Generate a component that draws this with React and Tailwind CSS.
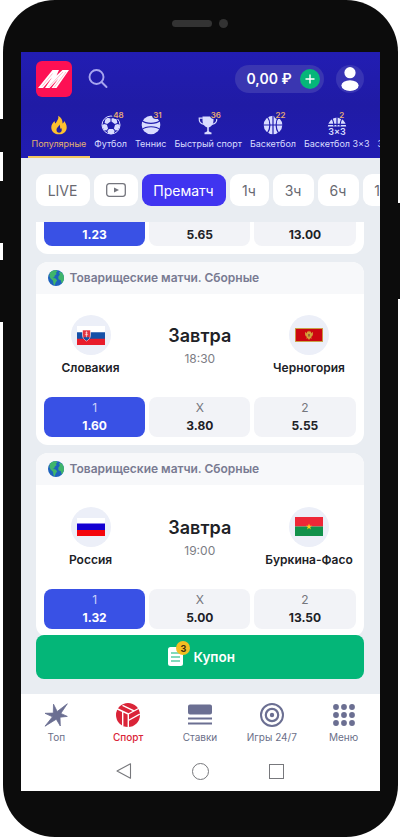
import React from 'react'

const sports = [
  { name: 'Популярные', icon: 'fire', active: true },
  { name: 'Футбол', icon: 'football', count: 48 },
  { name: 'Теннис', icon: 'tennis', count: 31 },
  { name: 'Быстрый спорт', icon: 'cup', count: 36 },
  { name: 'Баскетбол', icon: 'basketball', count: 22 },
  { name: 'Баскетбол 3×3', icon: 'basketball3', count: 2 },
]

const matches = [
  { home: 'Словакия', away: 'Черногория', homeFlag: 'sk', awayFlag: 'me', time: '18:30', odds: ['1.60', '3.80', '5.55'] },
  { home: 'Россия', away: 'Буркина-Фасо', homeFlag: 'ru', awayFlag: 'bf', time: '19:00', odds: ['1.32', '5.00', '13.50'] },
]

const SportIcon = ({ type }) => {
  if (type === 'fire') {
    return (
      <svg viewBox="0 0 20 20" className="size-5" fill="#fdc02f">
        <path d="M9.2.8c.5 2.4-.2 3.8-1.500 5.600C7.200 7 6.900 7.700 6.800 8.400 6 8 5.600 7.100 5.600 6.100 3.600 7.900 2.300 10 2.300 12.400c0 4 3.300 6.900 7.700 6.900s7.700-2.900 7.700-6.900c0-2.500-1.100-4.500-2.500-6.400-.2 1.200-.7 2-1.600 2.400C13.700 5 12.300 2.400 9.200.8z" />
        <path d="M10.300 9.500c.2 1.700-2.800 2.900-2.800 5.400 0 1.700 1.100 2.800 2.600 2.800s2.700-1.100 2.700-2.700c0-.9-.4-1.600-.8-2.200-.2.600-.5.900-.9 1.100.2-1.600.1-3.200-.8-4.400z" fill="#2320a8" />
      </svg>
    )
  }
  if (type === 'football') {
    return (
      <svg viewBox="0 0 20 20" className="size-5">
        <circle cx="10" cy="10" r="9" fill="#201cad" stroke="#d9dcff" strokeWidth="1" />
        <g fill="#d9dcff">
          <path d="M9.500 3.500v3L6.200 8.900 3.600 8 4.300 4.600 6.500 2.700zM10.500 3.500v3l3.300 2.400 2.600-.9-.7-3.400-2.200-1.900z" />
          <path d="M5.900 9.800l1.200 3.600-1.700 2-2.500-.5L1 10.500l2-1.600zM14.100 9.800l-1.200 3.600 1.700 2 2.500-.5L19 10.500l-2-1.600z" />
          <path d="M8 14h4l1.700 2.100-1 2.400-2.700.7-2.700-.7-1-2.400z" />
        </g>
      </svg>
    )
  }
  if (type === 'tennis') {
    return (
      <svg viewBox="0 0 20 20" className="size-5">
        <circle cx="10" cy="10" r="9.300" fill="#d9dcff" />
        <path d="M.8 5.500C5 9.200 15 9.200 19.200 5.500M.8 14.500c4.200-3.700 14.200-3.700 18.400 0" fill="none" stroke="#201cad" strokeWidth="1.200" />
      </svg>
    )
  }
  if (type === 'cup') {
    return (
      <svg viewBox="0 0 20 20" className="size-5" fill="#d9dcff">
        <path d="M4.500 1.500h11v4c0 3.700-1.900 6-4.700 6.900v3.600c.4.900 1.400 1.200 2.700 1.500v1.800h-7v-1.800c1.300-.3 2.300-.6 2.700-1.500v-3.600C6.400 11.500 4.500 9.200 4.500 5.500z" />
        <path d="M4.800 3.100H1.200c-.2 3.800 1.500 5.900 5.100 6.300M15.200 3.100h3.600c.2 3.800-1.500 5.900-5.100 6.300" fill="none" stroke="#d9dcff" strokeWidth="1.200" />
      </svg>
    )
  }
  if (type === 'basketball') {
    return (
      <svg viewBox="0 0 20 20" className="size-5">
        <circle cx="10" cy="10" r="9.300" fill="#d9dcff" />
        <path d="M10 0v20M0 10h20M4.200 1.500c3.600 4.800 3.600 12.200 0 17M15.800 1.500c-3.600 4.800-3.600 12.200 0 17" fill="none" stroke="#201cad" strokeWidth="1.200" />
      </svg>
    )
  }
  return (
    <svg viewBox="0 0 20 20" className="size-5 overflow-visible">
      <path d="M.8 11.500A9.300 10.500 0 0119.200 11.500z" fill="#d9dcff" />
      <path d="M10 .5v11M0 9.300h20M4.200 2.500c2 2.500 2.800 5.500 2.700 9M15.800 2.500c-2 2.500-2.800 5.500-2.700 9" fill="none" stroke="#201cad" strokeWidth="1.200" />
      <text x="10" y="19.500" textAnchor="middle" fontSize="9" fontWeight="600" fill="#d9dcff" fontFamily="Inter, sans-serif">3x3</text>
    </svg>
  )
}

const Flag = ({ code }) => (
  <span className="flex size-10 items-center justify-center rounded-full bg-[#eceff8]">
    {code === 'sk' && (
      <svg viewBox="0 0 28 19" className="h-[19px] w-7">
        <path fill="#fff" d="M0 0h28v7H0z" />
        <path fill="#1450a8" d="M0 6.300h28V13H0z" />
        <path fill="#e81c2a" d="M0 12.700h28V19H0z" />
        <path d="M5.500 4h8v5c0 3-1.800 4.800-4 6-2.200-1.200-4-3-4-6z" fill="#e5343f" stroke="#fff" strokeWidth=".6" />
        <path d="M6.500 12c.8-1.400 1.500-1.200 1.900-.6.600-1.200 1.600-1.200 2.200 0 .5-.6 1.200-.8 1.900.6-.7 1.200-1.800 2-3 2.700-1.200-.7-2.300-1.500-3-2.700z" fill="#1450a8" />
        <path d="M9.500 5.300v6M8.300 6.900h2.400M7.900 8.700h3.200" stroke="#fff" strokeWidth=".6" />
      </svg>
    )}
    {code === 'me' && (
      <svg viewBox="0 0 28 14" className="h-[14px] w-7">
        <path fill="#c9a24a" d="M0 0h28v14H0z" />
        <path fill="#cc0610" d="M.9.900h26.200v12.200H.9z" />
        <path d="M14 2.500l.8 1.300L16 3.500l.2 2 1.500-1.800c.6 2.500.2 4.300-1.700 5.300l1 1.500-1.800-.3L14 12l-1.200-1.800-1.800.3 1-1.500c-1.900-1-2.300-2.800-1.700-5.300l1.500 1.800.2-2 1.200.3z" fill="#d3a03a" />
        <path d="M13.200 6h1.600v2l-.8.900-.8-.9z" fill="#8b5a3c" />
      </svg>
    )}
    {code === 'ru' && (
      <svg viewBox="0 0 28 18" className="h-[18px] w-7">
        <path fill="#fff" d="M0 0h28v6H0z" />
        <path fill="#1400d2" d="M0 5.500h28V12H0z" />
        <path fill="#f4050c" d="M0 12h28v6H0z" />
      </svg>
    )}
    {code === 'bf' && (
      <svg viewBox="0 0 28 19" className="h-[19px] w-7">
        <path fill="#ee2737" d="M0 0h28v9.500H0z" />
        <path fill="#12914b" d="M0 9.500h28V19H0z" />
        <path fill="#fcd116" d="M14 6.500l.8 2.200h2.300l-1.900 1.400.7 2.300-1.900-1.400-1.900 1.400.7-2.300-1.900-1.400h2.300z" />
      </svg>
    )}
  </span>
)

const Globe = () => (
  <svg viewBox="0 0 16 16" className="size-4">
    <circle cx="8" cy="8" r="8" fill="#1d62bd" />
    <path d="M2 2.700C3.500.9 6 .1 8 .1l1.500 1.500-1.800 1.200 1 1.300-1.900 1.400-.5 1.700L4.500 8l2.700.3 2 1.900-1.500 2.300-1 2.700-1.200-.9-.5-3.600L2.600 8.500 1.400 6z" fill="#3fb56b" />
    <path d="M11 2l2.500.2C15 3.600 16 5.800 16 8c0 2.300-1 4.200-2.300 5.500l-.9-3.300-2.300-1-.3-2.500 1.600-1.900z" fill="#3fb56b" />
  </svg>
)

const Team = ({ name, flag }) => (
  <div className="flex w-[109px] flex-col items-center">
    <Flag code={flag} />
    <span className="mt-[5px] text-[12px] leading-[15px] font-semibold whitespace-nowrap text-[#202126]">{name}</span>
  </div>
)

const oddColors = (active) => active ? 'bg-[#3951e5] text-white' : 'bg-[#f2f3f7] text-[#202126]'

const Odd = ({ label, value, active }) => (
  <div className={`flex h-10 flex-1 flex-col items-center justify-center rounded-lg ${oddColors(active)}`}>
    <span className={`text-[12px] leading-[18px] ${active ? 'text-[#ccd3fa]' : 'text-[#75767d]'}`}>{label}</span>
    <span className="text-[12px] leading-[18px] font-bold">{value}</span>
  </div>
)

// Lower part of the card that is scrolled under the filter
const ScrolledCard = ({ values }) => (
  <div className="flex h-[31.5px] shrink-0 gap-1 rounded-b-xl bg-white px-2 pb-2">
    {values.map((v, i) => (
      <div key={v} className={`flex flex-1 items-center justify-center rounded-b-lg pt-[2px] text-[12px] font-bold ${oddColors(i === 0)}`}>{v}</div>
    ))}
  </div>
)

const MatchCard = ({ match }) => (
  <div className="h-[183.5px] shrink-0 overflow-hidden rounded-xl bg-white">
    <div className="flex h-8 items-center gap-[5.5px] bg-[#f7f8fa] pl-3 text-[12px] font-semibold text-[#797b92]">
      <Globe />
      <span>Товарищеские матчи. Сборные</span>
    </div>
    <div className="flex h-[103.5px] justify-between pt-[21.5px]">
      <Team name={match.home} flag={match.homeFlag} />
      <div className="flex flex-col items-center pt-[9px]">
        <span className="text-[18px] leading-6 font-semibold text-[#202126]">Завтра</span>
        <span className="mt-[3px] text-[12px] leading-4 text-[#7c7d84]">{match.time}</span>
      </div>
      <Team name={match.away} flag={match.awayFlag} />
    </div>
    <div className="flex gap-1 px-2">
      <Odd label="1" value={match.odds[0]} active />
      <Odd label="X" value={match.odds[1]} />
      <Odd label="2" value={match.odds[2]} />
    </div>
  </div>
)

const Chip = ({ children, className }) => (
  <span className={`flex h-8 shrink-0 items-center justify-center rounded-[9px] text-[14px] ${className}`}>{children}</span>
)

const NavItem = ({ label, active, children }) => (
  <div className={`flex w-[72px] flex-col items-center text-[10px] leading-[14px] ${active ? 'font-medium text-[#da2438]' : 'text-[#6b6f88]'}`}>
    <svg viewBox="0 0 24 24" className="size-6">{children}</svg>
    <span className="mt-[3px]">{label}</span>
  </div>
)

const Header = () => (
  <header className="h-[106px] shrink-0 bg-linear-to-b from-[#221db3] via-[#201ba5] to-[#211cb2]">
    <div className="flex h-[53px] items-center pr-4 pl-[15px]">
      <span className="flex size-9 items-center justify-center rounded-md bg-[#fd1054]">
        <svg viewBox="0 0 31 18" className="h-[18px] w-[31px]" fill="#fff">
          <path d="M0 18L14.500 0H21l-2.500 5.500L24.500 0H31L18.500 18h-5l7-9.500L11.500 18H7l7-10.500L5 18z" />
          <path d="M14.500 3.500L4 16.500M25 2L10.500 17M28 2L16 17.500" stroke="#fd1054" strokeWidth=".3" />
        </svg>
      </span>
      <svg viewBox="0 0 20 20" className="ml-4 size-5" fill="none" stroke="#a7a5ef" strokeWidth="1.900" strokeLinecap="round">
        <circle cx="8.500" cy="8" r="7" />
        <path d="M13.500 13L18.500 18" />
      </svg>
      <div className="ml-auto flex h-7 w-[89px] items-center justify-between rounded-full bg-[#3a36b1] pr-1 pl-3">
        <span className="text-[14px] font-semibold whitespace-nowrap text-white">0,00 ₽</span>
        <span className="flex size-5 items-center justify-center rounded-full bg-[#05b679]">
          <svg viewBox="0 0 10 10" className="size-[10px]" stroke="#fff" strokeWidth="1.400">
            <path d="M5 .5v9M.5 5h9" />
          </svg>
        </span>
      </div>
      <span className="ml-3 flex size-7 items-center justify-center rounded-full bg-[#3834b4]">
        <svg viewBox="0 0 18 24" className="h-6 w-[18px]" fill="#fff">
          <circle cx="9" cy="5.700" r="5.600" />
          <ellipse cx="9" cy="18.600" rx="8.600" ry="5.300" />
        </svg>
      </span>
    </div>
    <div className="flex h-[53px] gap-2 overflow-hidden pl-[11px]">
      {sports.map((s) => (
        <div key={s.name} className={`flex h-full shrink-0 flex-col items-center ${s.active ? 'text-[#e2b071]' : 'text-[#d9dcff]'}`}>
          <span className="relative mt-[10px]">
            <SportIcon type={s.icon} />
            {s.count && (
              <span className="absolute -top-[3px] left-[11.5px] rounded-bl-sm bg-[#201ca8] pl-px text-[8px] leading-[7px] font-semibold text-[#e6ab74]">{s.count}</span>
            )}
          </span>
          <span className="mt-[2px] text-[9px] leading-[14px] whitespace-nowrap">{s.name}</span>
          {s.active && <span className="mt-auto -mx-1 h-[2px] w-[62px] bg-[#f3c75f]" />}
        </div>
      ))}
      <span className="mt-[32px] shrink-0 text-[9px] leading-[14px] text-[#d9dcff]">Зимние</span>
    </div>
  </header>
)

const TimeFilter = () => (
  <div className="flex h-16 shrink-0 items-center gap-1 overflow-hidden pl-[15px] text-[#686971]">
    <Chip className="w-[54px] bg-white">LIVE</Chip>
    <Chip className="w-11 bg-white">
      <svg viewBox="0 0 20 14" className="h-[14px] w-5" fill="none" stroke="#74757d" strokeWidth="1.300">
        <rect x=".7" y=".7" width="18.600" height="12.600" rx="2.500" />
        <path d="M8 4.500l5 2.500-5 2.500z" fill="#74757d" stroke="none" />
      </svg>
    </Chip>
    <Chip className="w-[84px] bg-[#4034f0] text-white">Прематч</Chip>
    <Chip className="w-[39px] bg-white">1ч</Chip>
    <Chip className="w-[41px] bg-white">3ч</Chip>
    <Chip className="w-[41px] bg-white">6ч</Chip>
    <Chip className="w-[46px] bg-white">12ч</Chip>
  </div>
)

const BottomNav = () => (
  <nav className="flex h-[54px] shrink-0 justify-center pt-[9px]">
    <NavItem label="Топ">
      <path fill="#6b6f92" stroke="#6b6f92" strokeWidth=".8" strokeLinejoin="round" d="M9.500 1.200l3.700 7.300L23.300.8l-6.500 9.600 6.500 3-7.300.8.300 8.800-4-6.800L1 23.200l7.500-9.400L1 10.300l8.300-.2z" />
    </NavItem>
    <NavItem label="Спорт" active>
      <circle cx="12" cy="12" r="12" fill="#da2438" />
      <path d="M12.300 11V24M12.300 11L.5 5.500M12.300 11L23.500 5M6.700 8.700V23M6.500 2.300l11.500 5.500M12.300 17.500l11.500-6.500" fill="none" stroke="#fff" strokeWidth="1.400" />
    </NavItem>
    <NavItem label="Ставки">
      <path d="M0 3.500A2 2 0 012 1.500h20a2 2 0 012 2v6a2 2 0 01-2 2H2a2 2 0 01-2-2z" fill="#6b6f92" />
      <path d="M0 15.500h24M0 20.500h24" stroke="#6b6f92" strokeWidth="2.200" />
    </NavItem>
    <NavItem label="Игры 24/7">
      <circle cx="12" cy="12" r="11" fill="none" stroke="#6b6f92" strokeWidth="2" />
      <circle cx="12" cy="12" r="6.200" fill="none" stroke="#6b6f92" strokeWidth="2.200" />
      <circle cx="12" cy="12" r="2.200" fill="#6b6f92" />
    </NavItem>
    <NavItem label="Меню">
      {[4, 12, 20].map((y) => [4, 12, 20].map((x) => (
        <circle key={`${x}-${y}`} cx={x} cy={y} r="2.900" fill="#6b6f92" />
      )))}
    </NavItem>
  </nav>
)

const SystemBar = () => (
  <div className="flex h-[43px] shrink-0 items-center justify-center gap-[60px] pt-[3px] pr-px">
    <svg viewBox="0 0 16 16" className="size-4" fill="none" stroke="#77787c" strokeWidth="1.100" strokeLinejoin="round">
      <path d="M1 8L14.500.8v14.400z" />
    </svg>
    <span className="size-[17px] rounded-full border border-[#77787c]" />
    <span className="size-[15px] border border-[#77787c]" />
  </div>
)

const App = () => (
  <div className="relative h-[837px] w-[400px] overflow-hidden bg-white font-[Inter,sans-serif]">
    {/* Side buttons */}
    <span className="absolute top-[119px] left-0 h-[33px] w-1 bg-[#0c0c0c]" />
    <span className="absolute top-[181px] left-0 h-[62px] w-1 bg-[#0c0c0c]" />
    <span className="absolute top-[260px] left-0 h-[62px] w-1 bg-[#0c0c0c]" />
    <span className="absolute top-[203px] right-0 h-[96px] w-1 bg-[#0c0c0c]" />

    <div className="mx-auto flex h-full w-[395px] flex-col rounded-[52px] bg-[#0c0c0c]">
      <div className="flex h-[52px] shrink-0 items-center justify-center gap-[7px] pb-[5px]">
        <span className="h-[7px] w-10 rounded-sm bg-[#333]" />
        <span className="size-[9px] rounded-full bg-[#333]" />
      </div>

      <div className="mx-auto flex h-[739px] w-[359px] flex-col overflow-hidden bg-white">
        <Header />
        <main className="flex h-[536px] shrink-0 flex-col bg-[#e9edf2]">
          <TimeFilter />
          <div className="flex h-[472px] flex-col pr-4 pl-[15.5px]">
            <div className="flex h-[413px] flex-col gap-2 overflow-hidden">
              <ScrolledCard values={['1.23', '5.65', '13.00']} />
              {matches.map((m) => <MatchCard key={m.home} match={m} />)}
            </div>
            <button className="flex h-[43.5px] shrink-0 items-center justify-center gap-[10px] rounded-lg bg-[#04b678] pl-1 text-[13.5px] font-semibold text-white">
              <span className="relative">
                <svg viewBox="0 0 15 19" className="h-[19px] w-[15px]">
                  <rect width="15" height="19" rx="2.500" fill="#fff" />
                  <path d="M3 6h9M3 10h9M3 14h9" stroke="#04b678" strokeWidth="1.200" />
                </svg>
                <span className="absolute -top-[6px] left-[8px] flex size-[14px] items-center justify-center rounded-full bg-[#f3bd22] text-[9px] font-bold text-[#3b2c12]">3</span>
              </span>
              <span>Купон</span>
            </button>
          </div>
        </main>
        <BottomNav />
        <SystemBar />
      </div>
    </div>
  </div>
)

export default App
